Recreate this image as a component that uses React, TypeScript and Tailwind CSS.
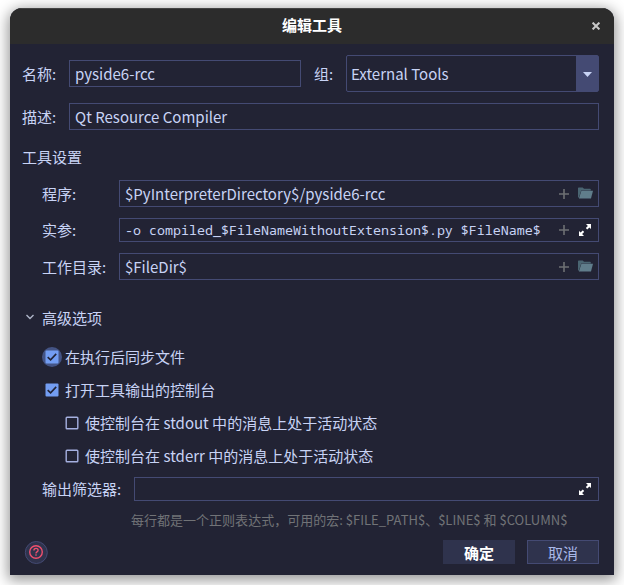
import React from "react";

const field = "flex items-center border border-[#444a73]";

function Plus() {
  return (
    <svg width="10" height="10" viewBox="0 0 10 10" className="block shrink-0">
      <path d="M5 0v10M0 5h10" stroke="#6e7073" strokeWidth="1.6" />
    </svg>
  );
}

function Folder() {
  return (
    <svg width="15" height="12" viewBox="0 0 15 12" className="mb-px block shrink-0">
      <path d="M0 10.5V1.200Q0 .5.7.5h4l1.300 1.300h6q.8 0 .8.8v.9H3.200L.9 10.500z" fill="#4a6572" />
      <path d="M3.400 3.800H15l-2 7.700H.9z" fill="#607d8b" />
    </svg>
  );
}

function Expand() {
  return (
    <svg width="12" height="12" viewBox="0 0 12 12" className="block shrink-0">
      <path d="M7 0h5v5l-1.600-1.600-2.200 2.100-1.400-1.400 2.100-2.200zM5 12H0V7l1.600 1.600 2.200-2.100 1.400 1.400-2.100 2.200z" fill="#fff" />
    </svg>
  );
}

function CheckBox({ checked, focused }: { checked?: boolean; focused?: boolean }) {
  return (
    <svg width="20" height="20" viewBox="0 0 20 20" className="block shrink-0">
      {focused && <circle cx="10" cy="10" r="10" fill="#445485" />}
      {checked ? (
        <>
          <rect x="3.5" y="3.5" width="13" height="13" rx="1" fill="#739df2" />
          <path d="M5.7 10.1l2.900 2.800 5.600-6" fill="none" stroke="#222436" strokeWidth="1.6" />
        </>
      ) : (
        <rect x="4.2" y="4.2" width="11.6" height="11.6" rx="0.8" fill="none" stroke="#a5b0e0" strokeWidth="1.4" />
      )}
    </svg>
  );
}

function Option({ label, checked, focused, nested }: { label: string; checked?: boolean; focused?: boolean; nested?: boolean }) {
  return (
    <div className={nested ? "flex h-[33px] items-center gap-[3px] pl-10" : "flex h-[33px] items-center gap-[3px] pl-5"}>
      <CheckBox checked={checked} focused={focused} />
      <span>{label}</span>
    </div>
  );
}

function PathRow({ label, value }: { label: string; value: string }) {
  return (
    <div className="flex h-[27px] items-center pl-5">
      <span className="w-[77px]">{label}</span>
      <div className={`${field} h-[27px] flex-1 pl-[5px] pr-[5px]`}>
        <span className="flex-1">{value}</span>
        <Plus />
        <span className="w-[9px]" />
        <Folder />
      </div>
    </div>
  );
}

export default function App() {
  return (
    <div className="h-[585px] w-[624px] overflow-hidden bg-white px-[10px] pt-2 font-['Noto_Sans_CJK_SC',sans-serif] text-[15.03px] leading-[22px] whitespace-pre text-[#c8d3f5]">
      <div className="h-[567px] overflow-hidden rounded-t-[12px] bg-[#222334] shadow-[0_3px_14px_2px_rgba(0,0,0,0.42)]">
        <header className="flex h-9 items-center border-t border-[#444] bg-[#2c2c2c] pr-[14px] pl-[22px]">
          <h1 className="flex-1 pb-[3px] text-center font-bold text-white">编辑工具</h1>
          <svg width="8" height="8" viewBox="0 0 8 8" className="mb-px">
            <path d="M.6.6l6.800 6.800M7.400.6L.6 7.400" stroke="#c8c8c8" strokeWidth="2" />
          </svg>
        </header>
        <main className="pt-[11px] pr-[15px] pl-3">
          <div className="flex h-[37px] items-center">
            <span className="w-[47px]">名称:</span>
            <div className={`${field} h-[27px] w-[232px] pl-[5px]`}>pyside6-rcc</div>
            <span className="w-[45px] pl-[13px]">组:</span>
            <div className={`${field} h-[37px] flex-1 rounded-[2px] pl-1`}>
              <span className="flex-1">External Tools</span>
              <span className="flex h-full w-[22px] items-center justify-center bg-[#444a73]">
                <svg width="9" height="5" viewBox="0 0 9 5" className="mt-px">
                  <path d="M0 0h9L4.500 5z" fill="#c8d3f5" />
                </svg>
              </span>
            </div>
          </div>
          <div className="mt-[11px] flex h-[27px] items-center">
            <span className="w-[47px]">描述:</span>
            <div className={`${field} h-[27px] flex-1 pl-[5px]`}>Qt Resource Compiler</div>
          </div>
          <h2 className="mt-4">工具设置</h2>
          <div className="mt-3">
            <PathRow label="程序:" value="$PyInterpreterDirectory$/pyside6-rcc" />
            <div className="my-[11px] flex h-6 items-center pl-5">
              <span className="w-[77px]">实参:</span>
              <div className={`${field} h-6 flex-1 pl-[5px] pr-[7px]`}>
                <span className="flex-1 font-['Noto_Sans_Mono','DejaVu_Sans_Mono',monospace] text-[13.34px]">-o compiled_$FileNameWithoutExtension$.py $FileName$</span>
                <Plus />
                <span className="w-[10px]" />
                <Expand />
              </div>
            </div>
            <PathRow label="工作目录:" value="$FileDir$" />
          </div>
          <div className="mt-[27px] flex h-[22px] items-center">
            <svg width="8" height="6" viewBox="0 0 8 6" className="mr-2 mb-[2px] ml-1 block">
              <path d="M.5 1L4 4.500 7.500 1" fill="none" stroke="#afb5c9" strokeWidth="1.4" />
            </svg>
            <span>高级选项</span>
          </div>
          <div className="mt-[11px]">
            <Option label="在执行后同步文件" checked focused />
            <Option label="打开工具输出的控制台" checked />
            <Option label="使控制台在 stdout 中的消息上处于活动状态" nested />
            <Option label="使控制台在 stderr 中的消息上处于活动状态" nested />
          </div>
          <div className="mt-[5px] flex h-6 items-center pl-5">
            <span className="w-[92px]">输出筛选器:</span>
            <div className={`${field} h-6 flex-1 justify-end pr-[7px]`}>
              <Expand />
            </div>
          </div>
          <p className="mt-2 pl-[109px] text-[13.03px] text-[#717377]">每行都是一个正则表达式，可用的宏: $FILE_PATH$、$LINE$ 和 $COLUMN$</p>
          <footer className="mt-[9px] flex h-6 items-center gap-3 pl-[2px]">
            <svg width="24" height="24" viewBox="0 0 24 24" className="mr-auto block">
              <circle cx="12.300" cy="12.500" r="11" fill="#2f334d" stroke="#444a73" />
              <circle cx="12" cy="12" r="6.300" fill="none" stroke="#f0506e" strokeWidth="1.4" />
              <path d="M9.900 10.500q0-2.200 2.100-2.200t2.100 1.900q0 1-1.100 1.700t-1 1.600M12 14.300v1.400" fill="none" stroke="#f0506e" strokeWidth="1.3" />
            </svg>
            <button className="flex h-6 w-[72px] items-center justify-center bg-[#2f334d] pt-px font-bold text-white">确定</button>
            <button className="flex h-6 w-[72px] items-center justify-center border border-[#444a73] bg-[#2f334d] pt-px text-[#a9b8e8]">取消</button>
          </footer>
        </main>
      </div>
    </div>
  );
}
